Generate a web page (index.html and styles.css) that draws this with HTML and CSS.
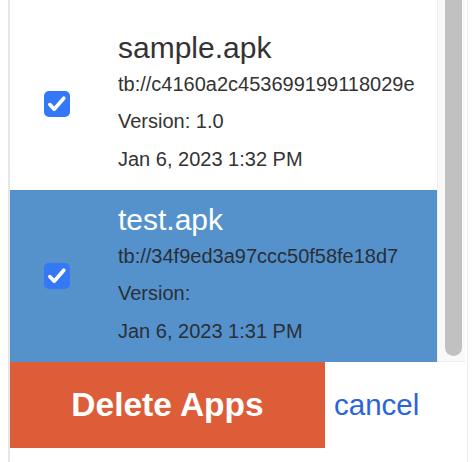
FILE: index.html
```html
<!DOCTYPE html>
<html lang="en">
<head>
<meta charset="utf-8">
<title>Delete Apps</title>
<link rel="stylesheet" href="styles.css">
</head>
<body>
<div class="panel">
  <div class="list">
    <div class="items">
      <div class="row">
        <span class="check">
          <svg width="26" height="26" viewBox="0 0 26 26"><rect x="0" y="0" width="26" height="26" rx="5" fill="#3478f6"/><path d="M5.8 13.6 L10.2 18.2 L19.8 7.2" fill="none" stroke="#fff" stroke-width="3.6" stroke-linecap="round" stroke-linejoin="round"/></svg>
        </span>
        <div class="info">
          <div class="name">sample.apk</div>
          <div class="line">tb://c4160a2c453699199118029e</div>
          <div class="line">Version: 1.0</div>
          <div class="line">Jan 6, 2023 1:32 PM</div>
        </div>
      </div>
      <div class="row selected">
        <span class="check">
          <svg width="26" height="26" viewBox="0 0 26 26"><rect x="0" y="0" width="26" height="26" rx="5" fill="#3478f6"/><path d="M5.8 13.6 L10.2 18.2 L19.8 7.2" fill="none" stroke="#fff" stroke-width="3.6" stroke-linecap="round" stroke-linejoin="round"/></svg>
        </span>
        <div class="info">
          <div class="name">test.apk</div>
          <div class="line">tb://34f9ed3a97ccc50f58fe18d7</div>
          <div class="line">Version: </div>
          <div class="line">Jan 6, 2023 1:31 PM</div>
        </div>
      </div>
    </div>
    <div class="scrollbar"><div class="thumb"></div></div>
  </div>
  <div class="footer">
    <button class="delete">Delete Apps</button>
    <a class="cancel" href="#">cancel</a>
  </div>
</div>
</body>
</html>
```
FILE: styles.css
```css
html, body {
  margin: 0;
  padding: 0;
  background: #ffffff;
}
body {
  font-family: "Liberation Sans", Arial, Helvetica, sans-serif;
  color: #333333;
}
.panel {
  margin-left: 8px;
  width: 457px;
  border-left: 2px solid #e6e6e6;
  border-right: 1px solid #ececec;
  height: 462px;
  box-sizing: content-box;
}
.list {
  display: flex;
  height: 362px;
  overflow: hidden;
}
.items {
  width: 427px;
  padding-top: 18px;
}
.row {
  height: 172px;
  display: flex;
  align-items: center;
  background: #ffffff;
}
.row.selected {
  background: #5592cc;
}
.check {
  width: 26px;
  height: 26px;
  margin-left: 34px;
  margin-right: 48px;
  display: block;
  flex: none;
}
.check svg {
  display: block;
}
.info {
  display: flex;
  flex-direction: column;
}
.name {
  font-size: 30px;
  line-height: 36px;
  color: #333333;
}
.line {
  font-size: 20px;
  line-height: 37.5px;
  color: #333333;
  white-space: nowrap;
}
.selected .name {
  color: #ffffff;
}
.selected .line {
  color: #2a2f36;
}
.scrollbar {
  width: 28px;
  background: #f9f9f9;
  border-left: 1px solid #eeeeee;
  border-bottom: 1px solid #eeeeee;
  box-sizing: border-box;
  height: 362px;
  padding-left: 7px;
}
.thumb {
  width: 17px;
  height: 356px;
  background: #c1c1c1;
  border-radius: 0 0 8.5px 8.5px;
}
.footer {
  display: flex;
  align-items: center;
  height: 86px;
}
.delete {
  width: 315px;
  height: 86px;
  border: none;
  margin: 0;
  padding: 0;
  background: #dd5d38;
  color: #ffffff;
  font-family: "Liberation Sans", Arial, Helvetica, sans-serif;
  font-weight: bold;
  font-size: 33.5px;
  cursor: pointer;
}
.cancel {
  margin-left: 9px;
  color: #2c64d9;
  font-size: 29.5px;
  text-decoration: none;
}
```
